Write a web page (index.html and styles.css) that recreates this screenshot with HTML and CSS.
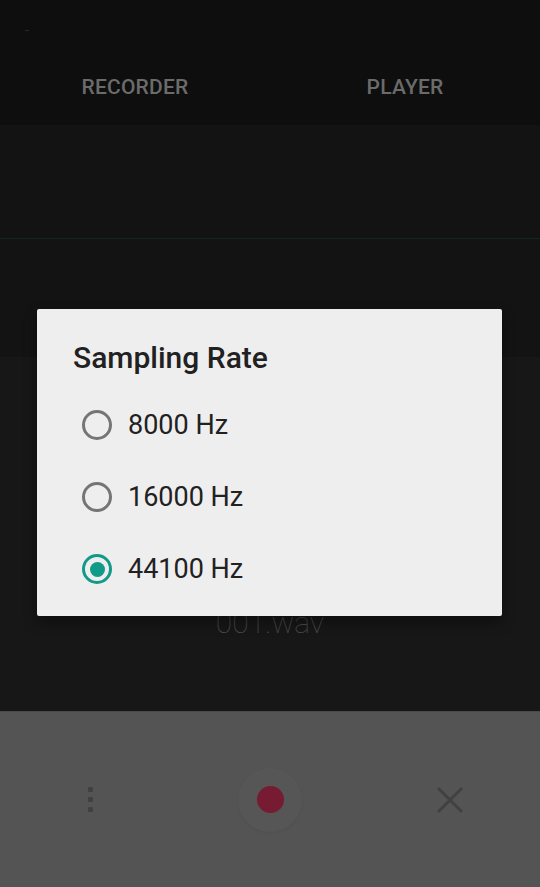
FILE: index.html
```html
<!DOCTYPE html>
<html>
<head>
<meta charset="utf-8">
<link rel="stylesheet" href="styles.css">
</head>
<body>
<div class="app">
  <header class="top">
    <div class="status"><span class="mark"></span></div>
    <nav class="tabs">
      <div class="tab">RECORDER</div>
      <div class="tab">PLAYER</div>
    </nav>
  </header>
  <section class="wave">
    <div class="line"></div>
  </section>
  <section class="info">
    <div class="filename">001.wav</div>
  </section>
  <footer class="controls">
    <div class="ctl">
      <div class="dots"><span></span><span></span><span></span></div>
    </div>
    <div class="ctl">
      <div class="rec-halo"><div class="rec"></div></div>
    </div>
    <div class="ctl">
      <svg class="close" width="28" height="28" viewBox="0 0 28 28"><path d="M2 2 L26 26 M26 2 L2 26" stroke="#414141" stroke-width="3" fill="none"/></svg>
    </div>
  </footer>

  <div class="dialog">
    <h1 class="title">Sampling Rate</h1>
    <ul class="options">
      <li class="option"><span class="radio"></span><span class="label">8000 Hz</span></li>
      <li class="option"><span class="radio"></span><span class="label">16000 Hz</span></li>
      <li class="option"><span class="radio checked"></span><span class="label">44100 Hz</span></li>
    </ul>
  </div>
</div>
</body>
</html>
```
FILE: styles.css
```css
* { box-sizing: border-box; }
html, body { margin: 0; padding: 0; }
body {
  width: 540px;
  height: 887px;
  overflow: hidden;
  font-family: Roboto, "Noto Sans", sans-serif;
  background: #171717;
}
.app {
  position: relative;
  width: 540px;
  height: 887px;
  display: flex;
  flex-direction: column;
}
.top {
  height: 125px;
  background: #0e0e0e;
  display: flex;
  flex-direction: column;
}
.status {
  height: 48px;
  padding: 30px 0 0 25px;
}
.mark {
  display: block;
  width: 4px;
  height: 1px;
  background: #2a2a2a;
}
.tabs {
  flex: 1;
  display: flex;
}
.tab {
  flex: 1;
  display: flex;
  align-items: center;
  justify-content: center;
  color: #6b6b6b;
  font-size: 21px;
  font-weight: 500;
  letter-spacing: 0.2px;
}
.wave {
  height: 232px;
  background: #131313;
  padding-top: 113px;
}
.line {
  height: 1px;
  background: #0f2821;
}
.info {
  height: 354px;
  background: #171717;
  display: flex;
  justify-content: center;
  padding-top: 248px;
}
.filename {
  color: #4a4a4a;
  font-size: 30px;
  font-weight: 100;
  line-height: 36px;
}
.controls {
  flex: 1;
  background: #545454;
  display: flex;
  border-top: 1px solid #4a4a4a;
}
.ctl {
  flex: 1;
  display: flex;
  align-items: center;
  justify-content: center;
}
.dots {
  display: flex;
  flex-direction: column;
  gap: 5px;
}
.dots span {
  width: 5px;
  height: 5px;
  border-radius: 1px;
  background: #404040;
}
.rec-halo {
  width: 64px;
  height: 64px;
  border-radius: 50%;
  background: #565656;
  box-shadow: 0 1px 3px rgba(0,0,0,0.06);
  display: flex;
  align-items: center;
  justify-content: center;
}
.rec {
  width: 27px;
  height: 27px;
  border-radius: 50%;
  background: #761b31;
}
.dialog {
  position: absolute;
  left: 37px;
  top: 309px;
  width: 465px;
  height: 307px;
  background: #eeeeee;
  border-radius: 2px;
  box-shadow: 0 6px 14px rgba(0,0,0,0.4);
  padding: 33px 0 0 36px;
}
.title {
  margin: 0;
  font-size: 30px;
  font-weight: 500;
  line-height: 32px;
  color: #212121;
}
.options {
  list-style: none;
  margin: 15px 0 0 0;
  padding: 0 0 0 9px;
}
.option {
  height: 72px;
  display: flex;
  align-items: center;
  gap: 16px;
}
.radio {
  width: 30px;
  height: 30px;
  border-radius: 50%;
  border: 3px solid #757575;
  display: flex;
  align-items: center;
  justify-content: center;
}
.radio.checked {
  border-color: #129a88;
}
.radio.checked::after {
  content: "";
  width: 15px;
  height: 15px;
  border-radius: 50%;
  background: #129a88;
}
.label {
  font-size: 27px;
  color: #212121;
}
```
